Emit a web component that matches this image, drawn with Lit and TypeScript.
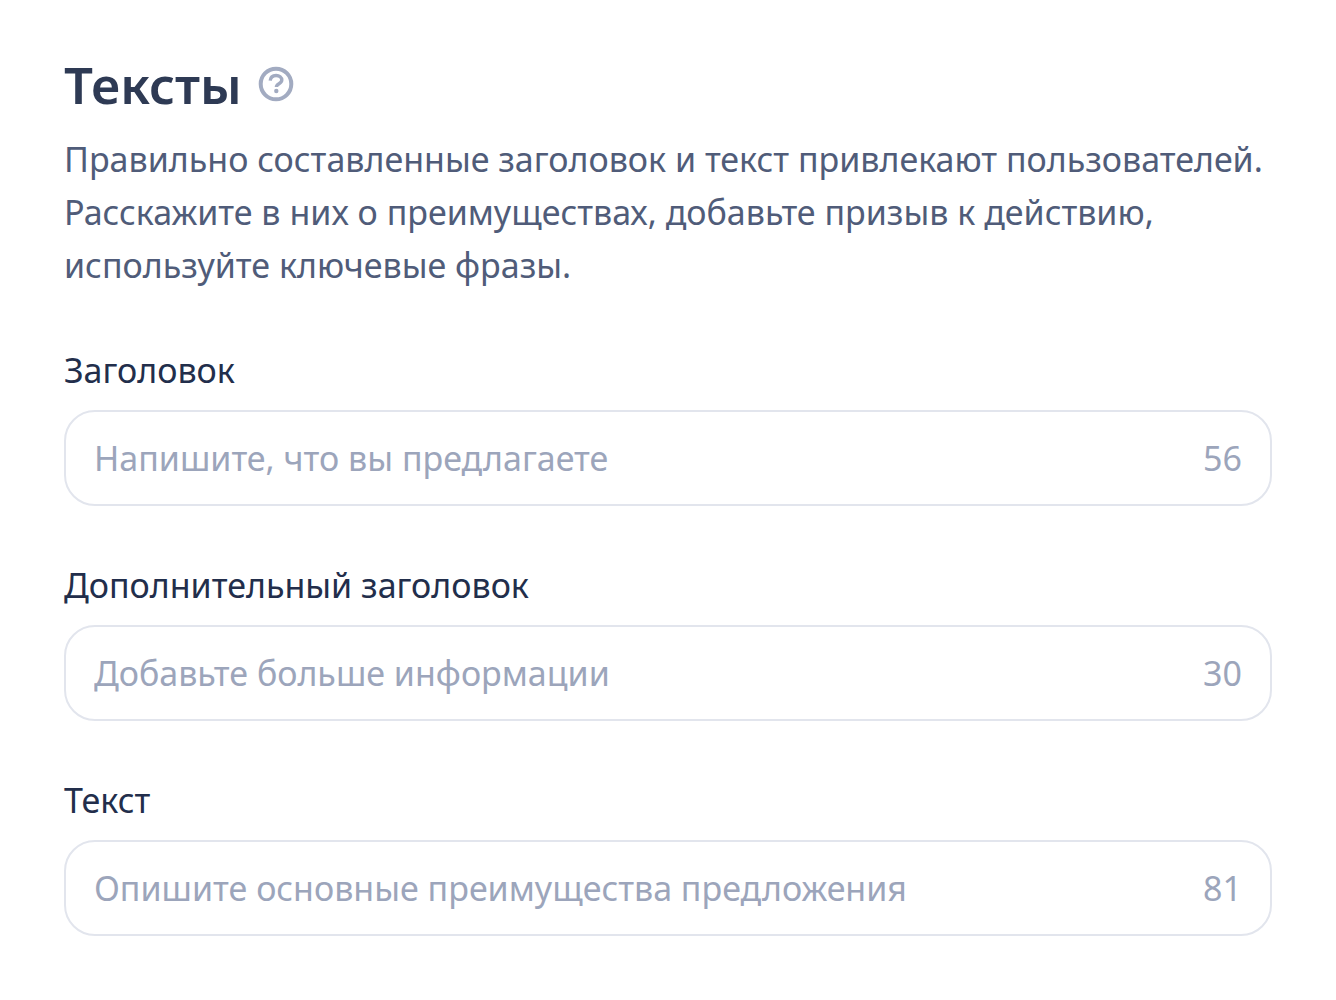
import { LitElement, html, css } from "lit";
import { customElement, property } from "lit/decorators.js";

@customElement("text-field")
class TextField extends LitElement {
  @property() label = "";
  @property() placeholder = "";
  @property({ type: Number }) limit = 0;

  static styles = css`
    :host { display: block; }
    .label { display: block; font-size: 34px; line-height: 48px; color: #222e4b; margin-bottom: 16px; }
    .box {
      display: flex; align-items: center; gap: 24px; box-sizing: border-box; height: 96px;
      padding: 0 28px; border: 2px solid #e2e5ed; border-radius: 31px; background: #fff;
    }
    .input {
      flex: 1; min-width: 0; border: 0; padding: 0; outline: none; background: none;
      font: inherit; font-size: 34px; line-height: 48px; color: #222e4b;
    }
    .input::placeholder { color: #9ca5bb; opacity: 1; }
    .count { font-size: 34px; line-height: 48px; color: #9ca5bb; }
  `;

  render() {
    return html`
      <label class="label" for="input">${this.label}</label>
      <div class="box">
        <input class="input" id="input" type="text" placeholder=${this.placeholder} maxlength=${this.limit} />
        <span class="count">${this.limit}</span>
      </div>
    `;
  }
}

@customElement("app-root")
class AppRoot extends LitElement {
  static styles = css`
    :host { display: block; background: #fff; font-family: "Noto Sans", sans-serif; }
    .page { padding: 48px 64px 62px; }
    .head { display: flex; align-items: center; gap: 16px; }
    .title { margin: 0; font-size: 51px; line-height: 72px; font-weight: 600; color: #2e3a54; }
    .help { display: flex; border: 0; padding: 0; background: none; color: #a2abc1; }
    .intro { margin: 13px 0 0; font-size: 34px; line-height: 53px; color: #505c79; }
    .fields { display: grid; gap: 55px; margin-top: 54px; }
  `;

  render() {
    return html`
      <main class="page">
        <div class="head">
          <h1 class="title">Тексты</h1>
          <button class="help" type="button" aria-label="Справка">
            <svg width="36" height="36" viewBox="0 0 36 36" fill="none" stroke="currentColor" stroke-width="4">
              <circle cx="18" cy="18" r="15.3" />
              <path d="M12.2 14.6c.3-3.400 2.700-5.100 5.900-5.100 3.300 0 5.700 1.800 5.700 4.600 0 3.900-5.400 3.400-5.400 7" stroke-width="3.4" />
              <circle cx="18.300" cy="25" r="2.200" fill="currentColor" stroke="none" />
            </svg>
          </button>
        </div>
        <p class="intro">
          Правильно составленные заголовок и текст привлекают пользователей.
          Расскажите в них о преимуществах, добавьте призыв к действию,
          используйте ключевые фразы.
        </p>
        <form class="fields">
          <text-field label="Заголовок" placeholder="Напишите, что вы предлагаете" limit="56"></text-field>
          <text-field label="Дополнительный заголовок" placeholder="Добавьте больше информации" limit="30"></text-field>
          <text-field label="Текст" placeholder="Опишите основные преимущества предложения" limit="81"></text-field>
        </form>
      </main>
    `;
  }
}
